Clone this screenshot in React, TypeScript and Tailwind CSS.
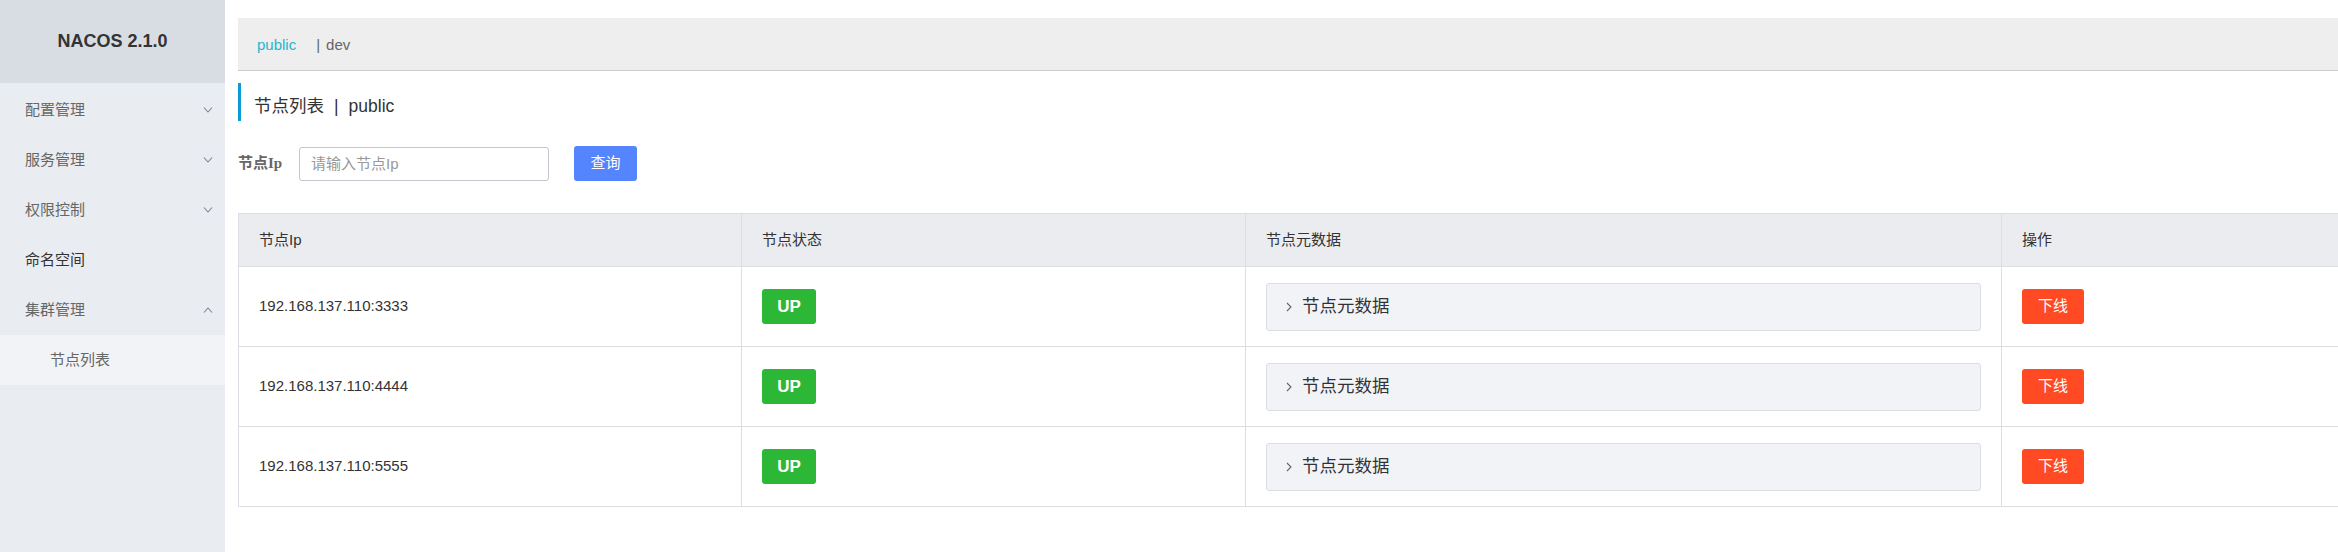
import React from "react";

const font = { fontFamily: "'Liberation Sans', 'Noto Sans CJK SC', sans-serif" };

const nodes = [
  "192.168.137.110:3333",
  "192.168.137.110:4444",
  "192.168.137.110:5555",
];

const headers = ["节点Ip", "节点状态", "节点元数据", "操作"];

function Chevron({ up = false }: { up?: boolean }) {
  return (
    <svg width="10" height="6" viewBox="0 0 10 6" className="text-[#7a8597]">
      <path
        d={up ? "M1 5.5 L5 1 L9 5.5" : "M1 0.5 L5 5 L9 0.5"}
        fill="none"
        stroke="currentColor"
        strokeWidth="1.1"
      />
    </svg>
  );
}

function MenuItem({ label, chevron, dark }: { label: string; chevron?: "up" | "down"; dark?: boolean }) {
  return (
    <div className="flex h-[50px] items-center justify-between pl-[25px] pr-[12px]">
      <span className={`text-[15px] ${dark ? "text-[#333]" : "text-[#666]"}`}>{label}</span>
      {chevron && <Chevron up={chevron === "up"} />}
    </div>
  );
}

export default function App() {
  return (
    <div className="flex h-[552px] w-full overflow-hidden bg-white" style={font}>
      {/* Sidebar */}
      <aside className="flex w-[225px] shrink-0 flex-col bg-[#e9ecf0]">
        <div className="flex h-[83px] items-center justify-center bg-[#d8dde4]">
          <span className="text-[18px] font-bold text-[#333]">NACOS 2.1.0</span>
        </div>
        <div className="mt-[2px]">
          <MenuItem label="配置管理" chevron="down" />
          <MenuItem label="服务管理" chevron="down" />
          <MenuItem label="权限控制" chevron="down" />
          <MenuItem label="命名空间" dark />
          <MenuItem label="集群管理" chevron="up" />
          <div className="flex h-[50px] items-center bg-[#f2f3f6] pl-[50px]">
            <span className="text-[15px] text-[#666]">节点列表</span>
          </div>
        </div>
      </aside>

      {/* Main */}
      <main className="min-w-0 flex-1 pl-[13px] pt-[18px]">
        <div className="flex h-[53px] items-center border-b border-[#cccccc] bg-[#eeeeee] pl-[19px] pt-[3px] text-[15px]">
          <span className="text-[#1fb5d0]">public</span>
          <span className="ml-[20px] text-[#666]">|</span>
          <span className="ml-[6px] text-[#666]">dev</span>
        </div>

        <div className="mt-[12px] flex h-[38px] items-center border-l-[3px] border-[#0c9bd4] pl-[13px] pt-[8px] text-[17.5px] text-[#333]">
          <span>节点列表</span>
          <span className="mx-[10px]">|</span>
          <span>public</span>
        </div>

        <div className="mt-[25px] flex h-[35px] items-center">
          <span
            className="w-[61px] text-[15px] font-bold text-[#666]"
            style={{ fontFamily: "'Liberation Serif', 'Noto Sans CJK SC', serif" }}
          >
            节点Ip
          </span>
          <input
            placeholder="请输入节点Ip"
            className="h-[34px] w-[250px] rounded-[3px] border border-[#c4c6cf] px-[11px] text-[15px] text-[#333] placeholder-[#999] outline-none"
          />
          <button className="ml-[25px] h-[35px] w-[63px] rounded-[3px] bg-[#5584ff] text-[15px] text-white">
            查询
          </button>
        </div>

        {/* Table */}
        <div className="mt-[32px] border-l border-t border-[#dcdee3]">
          <div className="grid h-[53px] grid-cols-[503px_504px_756px_1fr] bg-[#ebecf0] text-[15px] text-[#333]">
            {headers.map((h, i) => (
              <div
                key={h}
                className={`flex items-center border-b border-[#dcdee3] pl-[20px] ${i < 3 ? "border-r" : ""}`}
              >
                {h}
              </div>
            ))}
          </div>
          {nodes.map((ip) => (
            <div key={ip} className="grid h-[80px] grid-cols-[503px_504px_756px_1fr]">
              <div className="flex items-center border-b border-r border-[#dcdee3] pl-[20px] text-[15px] text-[#333]">
                {ip}
              </div>
              <div className="flex items-center border-b border-r border-[#dcdee3] pl-[20px]">
                <span className="flex h-[35px] w-[54px] items-center justify-center rounded-[3px] bg-[#2cb836] text-[17px] font-bold text-white">
                  UP
                </span>
              </div>
              <div className="flex items-center border-b border-r border-[#dcdee3] px-[20px]">
                <div className="flex h-[48px] w-full items-center rounded-[3px] border border-[#dcdee3] bg-[#f2f3f7] pl-[19px]">
                  <svg width="6" height="10" viewBox="0 0 6 10" className="text-[#666]">
                    <path d="M1 1 L5 5 L1 9" fill="none" stroke="currentColor" strokeWidth="1.1" />
                  </svg>
                  <span className="ml-[10px] text-[17.5px] text-[#333]">节点元数据</span>
                </div>
              </div>
              <div className="flex items-center border-b border-[#dcdee3] pl-[20px]">
                <button className="h-[35px] w-[62px] rounded-[3px] bg-[#ff4a24] text-[15px] text-white">
                  下线
                </button>
              </div>
            </div>
          ))}
        </div>
      </main>
    </div>
  );
}
